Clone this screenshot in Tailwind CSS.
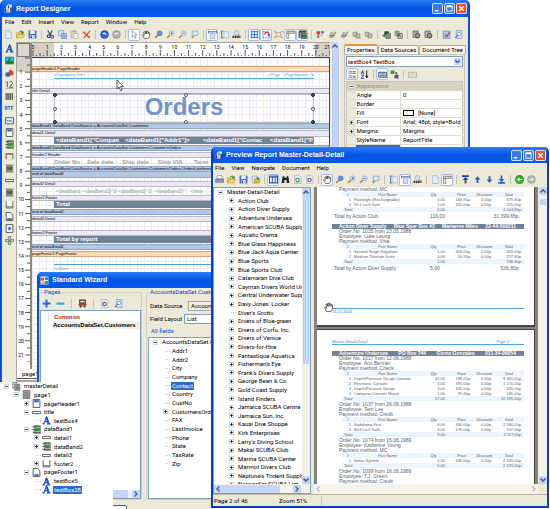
<!DOCTYPE html>
<html lang="en">
<head>
  <meta charset="UTF-8">
  <title>Report Designer</title>
  <script src="https://cdn.jsdelivr.net/npm/@tailwindcss/browser@4"></script>
</head>
<body class="bg-white font-[Roboto,'Liberation_Sans',sans-serif] text-[6px] leading-[8px] text-black">

<!-- icon sprite -->
<svg class="hidden">
  <symbol id="app" viewBox="0 0 16 16"><path d="M1 15V8l3-1V3l3-2h7v14z" fill="#dfe6f0"/><path d="M1 15V8h3v7zM7 3h2v5H7zM11 6h3v9h-3z" fill="#33405c"/><path d="M5 9h4v5H5z" fill="#e8b040"/></symbol>
  <symbol id="wiz" viewBox="0 0 16 16"><path d="M1 1h14v14H1z" fill="#e8eef8"/><path d="M2 3h5v5H2z" fill="#d84028"/><path d="M9 2h5v5H9z" fill="#3870d8"/><path d="M3 10h5v4H3z" fill="#e8b020"/><path d="M9 9h5v5H9z" fill="#30a048"/></symbol>
  <symbol id="new" viewBox="0 0 16 16"><path d="M3 1h7l3 3v11H3z" fill="#e4f0fd" stroke="#7fa3d6"/><path d="M10 1v3h3" fill="#fff" stroke="#7fa3d6"/></symbol>
  <symbol id="open" viewBox="0 0 16 16"><path d="M1 14V5h5l1 2h5v3" fill="#f6d36b" stroke="#b98a1c"/><path d="M1 14l3-6h11l-3 6z" fill="#ffd966" stroke="#b98a1c"/><path d="M6 4c2-3 5-3 6 0M14 3l-2 3-3-2" fill="none" stroke="#1f9a2c" stroke-width="2"/></symbol>
  <symbol id="save" viewBox="0 0 16 16"><path d="M1 1h13l1 1v13H1z" fill="#4b6fc8"/><path d="M4 1h8v6H4z" fill="#f2f6ff"/><path d="M4 9h8v6H4z" fill="#cdd9f2"/><path d="M5 10h2v4H5z" fill="#2a428c"/></symbol>
  <symbol id="cut" viewBox="0 0 16 16"><path d="M3 1l6 9M11 1L7 10" stroke="#33425f" stroke-width="2"/><circle cx="5" cy="11" r="2.500" fill="none" stroke="#33425f" stroke-width="2"/><circle cx="11" cy="12" r="2.500" fill="none" stroke="#2459c0" stroke-width="2"/></symbol>
  <symbol id="copy" viewBox="0 0 16 16"><path d="M1 1h9v9H1z" fill="#d9e8fb" stroke="#5585c9"/><path d="M6 6h9v9H6z" fill="#a9caf4" stroke="#3f74bd"/><path d="M8 9h5M8 12h5" stroke="#3f74bd"/></symbol>
  <symbol id="paste" viewBox="0 0 16 16"><path d="M2 2h10v12H2z" fill="#d8d5c8" stroke="#a5a294"/><path d="M5 1h4v3H5z" fill="#aaa79a"/><path d="M7 6h7v9H7z" fill="#f1f0ea" stroke="#a5a294"/></symbol>
  <symbol id="delete" viewBox="0 0 16 16"><path d="M2 3l12 11M14 2L3 14" stroke="#d8502c" stroke-width="2.600"/></symbol>
  <symbol id="undo" viewBox="0 0 16 16"><circle cx="8" cy="8" r="7" fill="#2867d8" stroke="#17429a"/><path d="M4 7c2-4 7-3 8 1l-3 .5c-.5-1.500-2-2-3-1z" fill="#dbe8ff"/></symbol>
  <symbol id="redo" viewBox="0 0 16 16"><circle cx="8" cy="8" r="7" fill="#aeb0b2" stroke="#88898b"/><path d="M12 7c-2-4-7-3-8 1l3 .5c.5-1.500 2-2 3-1z" fill="#e8e8e6"/></symbol>
  <symbol id="cursor" viewBox="0 0 16 16"><path d="M4 1v12l3-3 2 5 2-1-2-5h4z" fill="#fff" stroke="#668"/></symbol>
  <symbol id="hand" viewBox="0 0 16 16"><path d="M4 15l-3-6 1-1 2 2L3 4l2-1 1 4V2h2v5l1-5 2 1v4l1-3 2 1-1 7-2 3z" fill="#fff" stroke="#333" stroke-width="1.200"/></symbol>
  <symbol id="zoom" viewBox="0 0 16 16"><path d="M2 14l5-5" stroke="#c98a3c" stroke-width="3"/><circle cx="10" cy="6" r="4.400" fill="#5f93e6" stroke="#3f68b4"/></symbol>
  <symbol id="zoomin" viewBox="0 0 16 16"><path d="M2 14l5-5" stroke="#c98a3c" stroke-width="3"/><circle cx="10" cy="6" r="4.400" fill="#dce9fb" stroke="#6f96d0"/><path d="M8 6h4M10 4v4" stroke="#2459c0" stroke-width="1.400"/></symbol>
  <symbol id="zoomout" viewBox="0 0 16 16"><path d="M2 14l5-5" stroke="#c98a3c" stroke-width="3"/><circle cx="10" cy="6" r="4.400" fill="#dce9fb" stroke="#6f96d0"/><path d="M8 6h4" stroke="#2459c0" stroke-width="1.400"/></symbol>
  <symbol id="zoombox" viewBox="0 0 16 16"><path d="M3 14l4-4" stroke="#c98a3c" stroke-width="3"/><path d="M4 2h10v8H4z" fill="#dce9fb" stroke="#6f86b0"/></symbol>
  <symbol id="pagewidth" viewBox="0 0 16 16"><path d="M4 5h8v10H4z" fill="#cfe0f8" stroke="#6f93cc"/><path d="M1 1v5M15 1v5M2 3h12" stroke="#2a56b0" stroke-width="1.500"/></symbol>
  <symbol id="pageheight" viewBox="0 0 16 16"><path d="M7 3h8v11H7z" fill="#e6f0fc" stroke="#8aa9d8"/><path d="M1 2h5M1 14h5M3 3v10" stroke="#2a56b0" stroke-width="1.500"/></symbol>
  <symbol id="find" viewBox="0 0 16 16"><circle cx="8" cy="5" r="4" fill="#cfe3fa" stroke="#6d96cf"/><path d="M1 12h14" stroke="#333" stroke-width="4" stroke-dasharray="3 1"/><path d="M11 8l3 3" stroke="#c98a3c" stroke-width="2"/></symbol>
  <symbol id="grid" viewBox="0 0 16 16"><path d="M3 1v14M8 1v14M13 1v14M1 3h14M1 8h14M1 13h14" stroke="#3a66d8" stroke-width="1.600"/></symbol>
  <symbol id="snap" viewBox="0 0 16 16"><path d="M2 1v14M2 14h13M14 8v7M1 3h4" stroke="#3a66d8" stroke-width="1.500" stroke-dasharray="2 1"/><path d="M5 8c0-6 7-6 7 0" fill="none" stroke="#d03a28" stroke-width="2.400"/><path d="M9 8h6l-3 4z" fill="#234bb8"/></symbol>
  <symbol id="fit" viewBox="0 0 16 16"><path d="M4 5h8v6H4z" fill="#f6f3e8" stroke="#b0714c"/><path d="M1 2l3 2M15 2l-3 2M1 14l3-2M15 14l-3-2" stroke="#806a50" stroke-width="1.600"/></symbol>
  <symbol id="rulers" viewBox="0 0 16 16"><path d="M1 2h14v4H1zM1 6h4v9H1z" fill="#efe9d0" stroke="#555"/><path d="M4 2v2M7 2v2M10 2v2M13 2v2" stroke="#333"/></symbol>
  <symbol id="bands" viewBox="0 0 16 16"><path d="M2 1h13v4H2z" fill="#3b4c38"/><path d="M5 6h10v4H5zM5 11h10v4H5z" fill="#35a046" stroke="#224"/><path d="M2 2v12" stroke="#333" stroke-width="2"/></symbol>
  <symbol id="align" viewBox="0 0 16 16"><path d="M1 2h6v6H1z" fill="#d83a28"/><path d="M9 2h5v4H9z" fill="#4068d0"/><path d="M2 9h4v5H2z" fill="#7d8aa8"/><path d="M8 8h3v3H8z" fill="#e0b030"/></symbol>
  <symbol id="gray1" viewBox="0 0 16 16"><path d="M2 12l4-8 4 2 4-3-3 8-5 3z" fill="#c6c3b7" stroke="#77756c"/><path d="M4 10h7" stroke="#77756c" stroke-width="2"/></symbol>
  <symbol id="gray2" viewBox="0 0 16 16"><path d="M2 4h7v7H2zM7 7h7v7H7z" fill="#cbc8bc" stroke="#8a887e" stroke-width="1.400"/></symbol>
  <symbol id="group" viewBox="0 0 16 16"><path d="M4 2h8v9H4z" fill="#444" /><path d="M7 6h8v9H7z" fill="#8d8d84" stroke="#444"/><path d="M1 10h6M4 7v6" stroke="#1fa02e" stroke-width="2.400"/></symbol>
  <symbol id="ungroup" viewBox="0 0 16 16"><path d="M2 2h7v8H2zM7 6h8v9H7z" fill="#b9b7ad" stroke="#555"/><path d="M4 4l8 8M12 5l-7 8" stroke="#555" stroke-width="1.500"/></symbol>
  <symbol id="props-icon" viewBox="0 0 16 16"><path d="M2 2h9v11H2z" fill="#d9d7cc" stroke="#444" stroke-width="1.400"/><circle cx="10" cy="10" r="4" fill="#999" stroke="#333" stroke-width="1.400"/><path d="M4 5h5M4 8h3" stroke="#444"/></symbol>
  <symbol id="check" viewBox="0 0 16 16"><path d="M2 2h12v13H2z" fill="#a8c8f4" stroke="#4a78c4"/><path d="M5 8l3 4 6-8" fill="none" stroke="#d8502c" stroke-width="2.600"/></symbol>
  <symbol id="preview" viewBox="0 0 16 16"><path d="M4 1h10v14H4z" fill="#d6e7fc" stroke="#5a8ad0"/><circle cx="9" cy="7" r="3" fill="#fff" stroke="#3f74bd"/><path d="M2 14l5-5" stroke="#4a78c4" stroke-width="2"/></symbol>
  <symbol id="A" viewBox="0 0 16 16"><path d="M1 14h4M9 14h6M3 14L8 2l4 12M5 10h6" fill="none" stroke="#1f4fd0" stroke-width="2"/><path d="M8 2l4 12" stroke="#1f4fd0" stroke-width="3.400"/></symbol>
  <symbol id="picture" viewBox="0 0 16 16"><path d="M1 2h14v12H1z" fill="#25c8e8" stroke="#124"/><path d="M2 10l4-3 4 3 4-2v5H2z" fill="#157a2a"/><circle cx="8" cy="6" r="2" fill="#0d5a50"/></symbol>
  <symbol id="shape" viewBox="0 0 16 16"><path d="M1 8h8v7H1z" fill="#2b55c8"/><path d="M9 2l6 5v6H9L6 8z" fill="#d84028"/></symbol>
  <symbol id="num" viewBox="0 0 16 16"><path d="M4 3v10M2 4l2-2M8 4c2-3 6-1 5 2l-5 7h6" fill="none" stroke="#444" stroke-width="1.500"/><path d="M1 15h14" stroke="#888"/></symbol>
  <symbol id="barcode" viewBox="0 0 16 16"><path d="M1 2h14v12H1z" fill="#ddd"/><path d="M2 2v12M5 2v12M7 2v12M10 2v12M13 2v12" stroke="#333" stroke-width="1.600"/></symbol>
  <symbol id="sub" viewBox="0 0 16 16"><path d="M1 3h14v11H1z" fill="#eaf1ff" stroke="#2b55c8" stroke-width="1.600"/><path d="M4 10V7l2 2 2-2v3M10 7v3h3" fill="none" stroke="#345"/></symbol>
  <symbol id="phead" viewBox="0 0 16 16"><path d="M2 1h12v14H2z" fill="#fff" stroke="#444" stroke-width="1.500"/><path d="M4 2h8v4H4z" fill="#2b62dc"/></symbol>
  <symbol id="pfoot" viewBox="0 0 16 16"><path d="M2 1h8l4 4v10H2z" fill="#fff" stroke="#444" stroke-width="1.500"/><path d="M4 11h8v3H4z" fill="#2b62dc"/></symbol>
  <symbol id="pmid" viewBox="0 0 16 16"><path d="M2 1h12v14H2z" fill="#fff" stroke="#444" stroke-width="1.500"/><path d="M5 8h6M8 5v6" stroke="#2b62dc" stroke-width="3"/></symbol>
  <symbol id="band" viewBox="0 0 16 16"><path d="M4 1h11v14H4z" fill="#d8d4c4" stroke="#444"/><path d="M5 5h9v6H5z" fill="#23a336"/><path d="M1 3h5M1 8h4M1 13h5M5 3h9M5 13h9" stroke="#444" stroke-width="1.600"/></symbol>
  <symbol id="header" viewBox="0 0 16 16"><path d="M2 13V3h12v10" fill="none" stroke="#555" stroke-width="1.600"/><path d="M2 4h12" stroke="#777" stroke-width="2"/></symbol>
  <symbol id="ghead" viewBox="0 0 16 16"><path d="M1 2h14M1 14h14M3 5h10v6H3z" fill="#88857a" stroke="#444" stroke-width="1.500"/><path d="M4 6l8 4M12 6l-8 4" stroke="#333"/></symbol>
  <symbol id="detail" viewBox="0 0 16 16"><path d="M1 6h14v4H1z" fill="#fff" stroke="#444" stroke-width="1.500"/></symbol>
  <symbol id="footer" viewBox="0 0 16 16"><path d="M2 2v12h12V2" fill="#fff" stroke="#555" stroke-width="1.600"/><path d="M2 12h12" stroke="#777" stroke-width="2"/></symbol>
  <symbol id="cross" viewBox="0 0 16 16"><path d="M6 1h4v5h5v4h-5v5H6v-5H1V6h5z" fill="#d8d4c4" stroke="#444"/><path d="M6 6h4v4H6z" fill="#23a336"/></symbol>
  <symbol id="pages" viewBox="0 0 16 16"><path d="M1 1h8v10H1z" fill="#ccc" stroke="#555"/><path d="M5 4h9v11H5z" fill="#aaa" stroke="#444"/><path d="M7 7h5M7 10h5M7 12h5" stroke="#444"/></symbol>
  <symbol id="page" viewBox="0 0 16 16"><path d="M2 1h12v14H2z" fill="#aaa" stroke="#444"/><path d="M4 4h8M4 7h8M4 10h8M4 13h8" stroke="#444"/></symbol>
  <symbol id="print" viewBox="0 0 16 16"><path d="M4 1h8l1 6H3z" fill="#fff" stroke="#778"/><path d="M1 7h14v6H1z" fill="#8f9fb8" stroke="#556"/><path d="M4 11h8v3H4z" fill="#6ea0f0"/></symbol>
  <symbol id="export" viewBox="0 0 16 16"><path d="M2 2h9v12H2z" fill="#dfeafa" stroke="#6f93cc"/><path d="M6 7h9v7H6z" fill="#e9b94a" stroke="#a67a1c"/><path d="M8 5h4V2l3 4-3 3V7" fill="#1f9a2c"/></symbol>
  <symbol id="panel" viewBox="0 0 16 16"><path d="M1 2h14v12H1z" fill="#fff" stroke="#2b55c8" stroke-width="2"/><path d="M2 4h12M6 3v11M11 3v11" stroke="#2b55c8" stroke-width="1.600"/></symbol>
  <symbol id="binoc" viewBox="0 0 16 16"><path d="M3 2h3v3h4V2h3l2 12h-5V9H6v5H1z" fill="#1f2430"/></symbol>
  <symbol id="refresh" viewBox="0 0 16 16"><path d="M3 1h8l3 3v11H3z" fill="#e4f0fd" stroke="#7fa3d6"/><path d="M5 9c0-4 5-4 6-1M11 9c0 4-5 4-6 1" fill="none" stroke="#1f9a2c" stroke-width="2"/></symbol>
  <symbol id="setup" viewBox="0 0 16 16"><path d="M3 1h8l3 3v11H3z" fill="#eef3fa" stroke="#8fa3c6"/><circle cx="8" cy="9" r="3" fill="none" stroke="#667" stroke-width="2"/></symbol>
  <symbol id="first" viewBox="0 0 16 16"><path d="M2 2h12M8 15V6" stroke="#1e4896" stroke-width="3"/><path d="M3 9l5-6 5 6z" fill="#1e4896"/></symbol>
  <symbol id="prev" viewBox="0 0 16 16"><path d="M8 14V6" stroke="#2a62c8" stroke-width="3.400"/><path d="M3 8l5-6 5 6z" fill="#2a62c8"/></symbol>
  <symbol id="next" viewBox="0 0 16 16"><path d="M8 2v8" stroke="#2a62c8" stroke-width="3.400"/><path d="M3 8l5 6 5-6z" fill="#2a62c8"/></symbol>
  <symbol id="last" viewBox="0 0 16 16"><path d="M2 14h12M8 1v9" stroke="#2a62c8" stroke-width="3"/><path d="M3 7l5 6 5-6z" fill="#2a62c8"/></symbol>
  <symbol id="back" viewBox="0 0 16 16"><circle cx="8" cy="8" r="7.400" fill="#2fae2a" stroke="#1b7c1a"/><path d="M3 8l5-4v3h5v2H8v3z" fill="#fff"/></symbol>
  <symbol id="forward" viewBox="0 0 16 16"><circle cx="8" cy="8" r="7" fill="#b4b4b0" stroke="#94948f"/><path d="M13 8L8 4v3H3v2h5v3z" fill="#e8e8e6"/></symbol>
  <symbol id="plus" viewBox="0 0 16 16"><path d="M8 1v14M1 8h14" stroke="#1f6ad8" stroke-width="3.400"/></symbol>
  <symbol id="minus" viewBox="0 0 16 16"><path d="M1 8h14" stroke="#36a8e8" stroke-width="4"/></symbol>
  <symbol id="train" viewBox="0 0 16 16"><path d="M2 1h12v10H2z" fill="#4a3028"/><path d="M4 3h8v3H4z" fill="#e8d8c8"/><path d="M1 8h14v4H1z" fill="#c04028"/><path d="M3 12h3v3H3zM10 12h3v3h-3z" fill="#222"/></symbol>
  <symbol id="cats" viewBox="0 0 16 16"><path d="M2 2h4v4H2zM2 10h4v4H2z" fill="#fff" stroke="#445"/><path d="M8 3h6M8 6h6M8 11h6M8 14h6" stroke="#445" stroke-width="1.400"/></symbol>
  <symbol id="az" viewBox="0 0 16 16"><path d="M2 7l2.500-6L7 7M3 5h3M2 9h5l-5 6h5" fill="none" stroke="#2348a8" stroke-width="1.600"/><path d="M12 1v12" stroke="#222" stroke-width="1.800"/><path d="M9 10h6l-3 5z" fill="#222"/></symbol>
  <symbol id="pbox" viewBox="0 0 16 16"><path d="M1 4h14v9H1z" fill="#b7c9e8" stroke="#334a7c" stroke-width="1.500"/><path d="M4 7h8M4 10h8" stroke="#334a7c"/></symbol>
  <symbol id="events" viewBox="0 0 16 16"><path d="M1 1h7v6H1z" fill="#23a336"/><path d="M9 5h3v5" fill="none" stroke="#222" stroke-width="1.500"/><path d="M8 9h7v6H8z" fill="#556"/></symbol>
  <symbol id="ppage" viewBox="0 0 16 16"><path d="M1 4h14v9H1z" fill="#e4e1d4" stroke="#b4b1a4" stroke-width="1.500"/><path d="M4 8h8" stroke="#b4b1a4"/></symbol>
  <symbol id="exp" viewBox="0 0 9 9"><path d="M.5.500h8v8h-8z" fill="#fff" stroke="#8c9cb0"/><path d="M2 4.500h5M4.500 2v5" stroke="#000" stroke-width="1.400"/></symbol>
  <symbol id="col" viewBox="0 0 9 9"><path d="M.5.500h8v8h-8z" fill="#fff" stroke="#8c9cb0"/><path d="M2 4.500h5" stroke="#000" stroke-width="1.400"/></symbol>
  <symbol id="up" viewBox="0 0 8 8"><path d="M1.500 5.500L4 3l2.500 2.500" fill="none" stroke="#4d6185" stroke-width="1.600"/></symbol>
  <symbol id="down" viewBox="0 0 8 8"><path d="M1.500 2.500L4 5l2.500-2.500" fill="none" stroke="#4d6185" stroke-width="1.600"/></symbol>
  <symbol id="left" viewBox="0 0 8 8"><path d="M5.500 1.500L3 4l2.500 2.500" fill="none" stroke="currentColor" stroke-width="1.400"/></symbol>
  <symbol id="right" viewBox="0 0 8 8"><path d="M2.500 1.500L5 4 2.500 6.500" fill="none" stroke="currentColor" stroke-width="1.400"/></symbol>
  <symbol id="wmin" viewBox="0 0 10 10"><path d="M2 7.500h4" stroke="#fff" stroke-width="1.600"/></symbol>
  <symbol id="wmax" viewBox="0 0 10 10"><path d="M2 2.500h6v5.500H2z" fill="none" stroke="#fff"/><path d="M2 2.500h6" stroke="#fff" stroke-width="2"/></symbol>
  <symbol id="wclose" viewBox="0 0 10 10"><path d="M2.500 2.500l5 5M7.500 2.500l-5 5" stroke="#fff" stroke-width="1.500"/></symbol>
</svg>

<main class="relative h-screen overflow-hidden">

  <!-- Report Designer window -->
  <section class="absolute left-0 top-0 w-[470px] h-[382px] flex flex-col rounded-t-[5px] bg-[#0a50e0] px-[2px] overflow-hidden">
    <header class="h-[17px] shrink-0 flex items-center gap-[3px] pl-[2px] bg-linear-to-b from-[#2a7cf6] via-[#0455e4] to-[#0558ea] text-white">
      <svg class="size-[9px]"><use href="#app"/></svg>
      <h1 class="flex-1 font-['Liberation_Sans'] text-[7px] font-bold">Report Designer</h1>
      <div class="flex gap-px pr-px" data-winbtns></div>
    </header>
    <nav class="h-[10px] shrink-0 flex items-center gap-[7px] pl-[3px] bg-[#ece9d8]">
      <button>File</button><button>Edit</button><button>Insert</button><button>View</button><button>Report</button><button>Window</button><button>Help</button>
    </nav>
    <div class="h-[15px] shrink-0 flex items-center bg-[#ece9d8]" data-icons="new open save | cut copy paste delete | undo redo | *cursor hand zoom zoomin zoomout zoombox | *pagewidth pageheight find | *grid *snap fit *rulers *bands | align gray1 gray1 gray2 gray2 | group ungroup | props-icon props-icon | check preview"></div>

    <div class="flex-1 min-h-0 flex bg-[#ece9d8]">
      <div class="w-[14px] flex flex-col items-center shrink-0">
        <div class="flex flex-col" data-icons="A picture shape num barcode"></div>
        <button class="h-[12px] text-[5px] font-bold text-[#2b55c8]">RTF</button>
        <div class="flex flex-col" data-icons="sub phead band header ghead detail ghead footer pfoot pmid cross"></div>
      </div>
      <div class="flex-1 min-w-0 flex flex-col">
        <div class="flex-1 min-h-0 flex border-l border-t border-[#aca899] bg-white">
          <!-- vertical ruler -->
          <div class="w-[15px] shrink-0 border-r-2 border-[#8c8a80]">
            <div class="h-[14px] border border-[#777] bg-[#dcdad0]"></div>
            <svg class="w-full h-[305px]" id="vruler"></svg>
          </div>
          <div class="flex-1 min-w-0 flex flex-col">
            <svg class="w-full h-[14px] shrink-0 bg-white" id="hruler"></svg>
            <!-- design surface -->
            <div class="flex-1 min-h-0 border-t border-r border-[#444] bg-white bg-[linear-gradient(to_right,#ebe9f6_1px,transparent_1px),linear-gradient(#ebe9f6_1px,transparent_1px)] bg-[size:7px_7px] font-['Liberation_Sans'] text-[4px] leading-[4px] whitespace-nowrap overflow-hidden">
              <div class="mt-[8px] h-[6px] border-y border-[#c8a888] bg-[#fdd9b4]">pageHeader1:PageHeader</div>
              <div class="h-[7px] ml-[22px] mr-[15px] flex justify-between items-center italic text-[#5b9bd5] border-b border-[#4aa3dc]"><span>&lt;Document Title&gt;</span><span>="Page "+PageNumber.To</span></div>
              <div class="mt-[9px] h-[6px] border-y border-[#aaa] bg-[#e8e8fa]">title Detail</div>
              <div class="relative h-[29px] ml-[22px] mr-[15px] border border-[#bbb] flex items-center justify-center font-bold text-[24px] leading-[24px] text-[#7093c8] pb-[3px]">Orders
                <i class="absolute -left-[2px] -top-[2px] size-[4px] rounded-full bg-[#2b62b8] border border-[#222]"></i>
                <i class="absolute left-1/2 -top-[2px] size-[4px] rounded-full bg-white border border-[#555]"></i>
                <i class="absolute -right-[2px] -top-[2px] size-[4px] rounded-full bg-[#2b62b8] border border-[#222]"></i>
                <i class="absolute -left-[2px] top-[12px] size-[4px] rounded-full bg-white border border-[#555]"></i>
                <i class="absolute -right-[2px] top-[12px] size-[4px] rounded-full bg-white border border-[#555]"></i>
                <i class="absolute -left-[2px] -bottom-[2px] size-[4px] rounded-full bg-[#2b62b8] border border-[#222]"></i>
                <i class="absolute left-1/2 -bottom-[2px] size-[4px] rounded-full bg-white border border-[#555]"></i>
                <i class="absolute -right-[2px] -bottom-[2px] size-[4px] rounded-full bg-[#2b62b8] border border-[#222]"></i>
              </div>
              <div class="h-[6px] border-y border-[#8fa4c4] bg-[#b4c8e4]">dataBand1 DataBand DataSource = AccountsDataSet.Customers</div>
              <div class="mt-px h-[7px] border-y border-[#bbb] bg-[#e8e8fa]">detail1 Detail</div>
              <div class="h-[7px] ml-[22px] mr-[15px] pl-[2px] flex items-center gap-[5px] bg-[#708296] text-white font-bold text-[6px] leading-[7px]"><span class="w-[64px]">&lt;dataBand1["Compan</span><span class="w-[73px]">&lt;dataBand1["Addr1"]&gt;</span><span class="w-[62px]">&lt;dataBand1["Contac</span><span>&lt;dataBand1["P</span></div>
              <div class="mt-px h-[6px] border-y border-[#8fa4c4] bg-[#b4c8e4]">dataBand2:DataBand DataSource = AccountsDataSet.Customers.CustomersOrders</div>
              <div class="mt-px h-[6px] border-y border-[#bbb] bg-[#e8e8fa]">header2 Header</div>
              <div class="h-[8px] ml-[22px] flex items-center font-bold text-[6px] text-[#9aa2b0]"><span class="w-[33px]">Order No</span><span class="w-[35px]">Sale date</span><span class="w-[36px]">Ship date</span><span class="w-[36px]">Ship VIA</span><span>Term</span></div>
              <div class="h-[6px] border-y border-[#8fa4c4] bg-[#b4c8e4]">dataBand3:DataBand DataSource = AccountsDataSet.Customers.CustomersOrders.OrdersLineItems</div>
              <div class="h-[6px] border-b border-[#8fa4c4] bg-[#b4c8e4]">end of dataBand3</div>
              <div class="mt-[3px] h-[6px] border-y border-[#bbb] bg-[#e8e8fa]">detail2:Detail</div>
              <div class="h-[8px] ml-[22px] pl-[2px] flex items-center text-[5px] text-[#9aa2b0]"><span class="w-[27px]">&lt;dataBand</span><span class="w-[35px]">&lt;dataBand2["S</span><span class="w-[37px]">&lt;dataBand2["S</span><span class="w-[35px]">&lt;dataBand2["</span><span>&lt;data</span></div>
              <div class="h-[6px] border-y border-[#bbb] bg-[#e8e8fa]">footer1 Footer</div>
              <div class="h-[7px] ml-[22px] mr-[15px] pl-[2px] bg-[#708296] text-white font-bold text-[6px] leading-[7px]">Total</div>
              <div class="mt-px h-[6px] border-y border-[#8fa4c4] bg-[#b4c8e4]">end of dataBand2</div>
              <div class="mt-px h-[6px] border-y border-[#bbb] bg-[#e8e8fa]">detail3:Detail</div>
              <div class="mt-[8px] h-[6px] border-y border-[#bbb] bg-[#e8e8fa]">footer2:Footer</div>
              <div class="h-[7px] ml-[22px] mr-[15px] pl-[2px] bg-[#708296] text-white font-bold text-[6px] leading-[7px]">Total by report</div>
              <div class="mt-px h-[6px] border-y border-[#8fa4c4] bg-[#b4c8e4]">end of dataBand1</div>
              <div class="mt-px h-[6px] border-y border-[#c8a888] bg-[#fdd9b4]">pageFooter1:PageFooter</div>
              <div class="mt-[7px] ml-[22px] mr-[15px] pt-[2px] border-t border-[#4aa3dc] italic text-[#5b9bd5]">&lt;=Now&gt;</div>
            </div>
          </div>
        </div>
        <div class="h-[13px] flex items-start bg-white border-l border-b-2 border-[#aca899]"><button class="h-[10px] pl-[5px] pr-[6px] border-b border-[#555]">page1</button></div>
      </div>
      <div class="w-[11px] shrink-0 px-px" data-vscroll="0"></div>

      <!-- properties panel -->
      <aside class="w-[127px] shrink-0 py-[2px] px-[3px] flex flex-col">
        <div class="flex items-end h-[10px] whitespace-nowrap">
          <button class="h-full px-[2px] bg-[#fbfaf6] border border-b-0 border-t-2 border-[#b0ad9e] border-t-[#e89430] rounded-t-[2px]">Properties</button>
          <button class="h-[9px] px-[2px] bg-[#f5f3ea] border border-b-0 border-[#b0ad9e] rounded-t-[2px]">Data Sources</button>
          <button class="h-[9px] px-[2px] bg-[#f5f3ea] border border-b-0 border-[#b0ad9e] rounded-t-[2px]">Document Tree</button>
        </div>
        <div class="flex-1 flex flex-col border border-[#c8c5b6] px-px pt-px">
          <div class="relative">
            <select aria-label="Object" class="block w-full h-[11px] pl-px appearance-none bg-white border border-[#7f9db9]"><option>textBox4 TextBox</option></select>
            <svg class="absolute right-[2px] top-[2px] size-[7px] bg-[#c4d5fa] pointer-events-none"><use href="#down"/></svg>
          </div>
          <div class="h-[14px] flex items-center" data-icons="*cats az | *pbox events | ppage"></div>
          <table class="w-full table-fixed bg-white border border-[#c8c5b6]">
            <colgroup><col class="w-[9px]"><col class="w-[45px]"><col></colgroup>
            <tbody id="props"></tbody>
          </table>
        </div>
      </aside>
    </div>
  </section>

  <!-- Standard Wizard window -->
  <section class="absolute left-[37px] top-[272px] -bottom-[10px] w-[180px] flex flex-col rounded-t-[5px] bg-[#0a50e0] pl-[2px] overflow-hidden">
    <header class="h-[16px] shrink-0 flex items-center gap-[3px] pl-px bg-linear-to-b from-[#2a7cf6] via-[#0455e4] to-[#0558ea] text-white">
      <svg class="size-[9px]"><use href="#wiz"/></svg>
      <h2 class="font-['Liberation_Sans'] text-[7px] font-bold">Standard Wizard</h2>
    </header>
    <div class="flex-1 min-h-0 flex gap-[4px] bg-[#ece9d8] whitespace-nowrap">
      <div class="w-[103px] shrink-0 flex flex-col">
        <fieldset class="flex-1 min-h-0 flex flex-col border border-[#d0d0bf] rounded-[2px]">
          <legend class="ml-[3px] px-px text-[#0046d5]">Pages</legend>
          <div class="h-[14px] shrink-0 flex items-center gap-[2px]" data-icons="plus minus | train | setup preview"></div>
          <div class="flex-1 flex flex-col border border-[#7f9db9] bg-white font-['Liberation_Sans'] font-bold">
            <div class="mt-[2px] ml-[7px] pl-[5px] border-l border-[#ddd] text-[#b02818]">Common</div>
            <div class="ml-[12px] bg-[#f4f1e2] overflow-hidden">AccountsDataSet.Customers</div>
            <div class="flex-1"></div>
            <div class="h-[8px] flex justify-end bg-[#f3f1ea] text-[#4d6185]"><div class="w-[60px] bg-[#c4d5fa] rounded-[1px]"></div><svg class="ml-[4px] size-[8px] bg-[#c4d5fa]"><use href="#right"/></svg></div>
          </div>
        </fieldset>
        <div class="h-[19px] pt-[5px] pl-[60px]"><button aria-label="Back" class="block w-[28px] h-[14px] bg-white border border-[#4a6080] rounded-[2px]"></button></div>
      </div>
      <div class="flex-1 min-w-0 flex flex-col pb-[19px]">
        <fieldset class="flex-1 min-w-0 min-h-0 flex flex-col border border-r-0 border-[#d0d0bf] rounded-[2px] pl-px">
          <legend class="ml-px px-px text-[#0046d5]">AccountsDataSet.Custo</legend>
          <div class="flex items-center h-[11px] mt-[4px] pl-[2px]"><label for="ds" class="w-[38px] shrink-0">Data Source</label><select id="ds" class="flex-1 min-w-0 h-[10px] pl-[2px] appearance-none bg-[#f0eee2] border border-[#aca899]"><option>AccountsDataSet</option></select></div>
          <div class="flex items-center h-[11px] mt-[2px] pl-[2px]"><label for="fl" class="w-[34px] shrink-0">Field Layout</label><select id="fl" class="flex-1 min-w-0 h-[10px] pl-[2px] appearance-none bg-white border border-[#7f9db9]"><option>List</option></select></div>
          <div class="mt-[3px] h-[10px] pl-[3px] text-[#0046d5]">All fields</div>
          <div class="flex-1 min-h-0 border border-r-0 border-[#7f9db9] bg-white"><ul class="h-[130px] flex flex-col" id="fields"></ul></div>
        </fieldset>
      </div>
    </div>
  </section>

  <!-- document tree -->
  <section class="absolute left-0 top-[382px] bottom-0 w-[113px] bg-white">
    <ul class="h-[112px] flex flex-col" id="doctree"></ul>
  </section>

  <!-- Preview window -->
  <section class="absolute left-[211px] right-px top-[147px] bottom-px flex flex-col rounded-t-[5px] bg-[#0a3fc4] px-[2px] pb-[2px] overflow-hidden">
    <header class="h-[16px] shrink-0 flex items-center gap-[3px] pl-[2px] bg-linear-to-b from-[#2a7cf6] via-[#0455e4] to-[#0558ea] text-white">
      <svg class="size-[8px]"><use href="#app"/></svg>
      <h2 class="flex-1 font-['Liberation_Sans'] text-[7px] font-bold">Preview Report Master-Detail-Detail</h2>
      <div class="flex gap-px pr-px" data-winbtns></div>
    </header>
    <nav class="h-[9px] shrink-0 flex items-center gap-[7px] pl-[2px] bg-[#ece9d8]">
      <button>File</button><button>View</button><button>Navigate</button><button>Document</button><button>Help</button>
    </nav>
    <div class="h-[15px] shrink-0 flex items-center bg-[#ece9d8]" data-icons="print open save export | *panel binoc refresh setup | *hand zoom zoomin zoomout zoombox | pageheight *pagewidth find | new *rulers | first prev next last | back forward"></div>

    <div class="flex-1 min-h-0 flex bg-[#ece9d8]">
      <div class="w-[98px] shrink-0 flex flex-col border border-[#7f9db9] bg-white">
        <div class="flex-1 min-h-0 flex">
          <div class="flex-1 min-w-0 overflow-hidden"><ul class="h-[301px] flex flex-col" id="outline"></ul></div>
          <div class="w-[8px] shrink-0" data-vscroll="1"></div>
        </div>
        <div class="h-[9px] shrink-0 flex items-center bg-[#f3f1ea] text-[#4d6185] pr-[9px]"><svg class="size-[8px] bg-[#c4d5fa]"><use href="#left"/></svg><div class="w-[58px] h-[8px] bg-[#c4d5fa] rounded-[1px]"></div><div class="flex-1"></div><svg class="size-[8px] bg-[#c4d5fa]"><use href="#right"/></svg></div>
      </div>
      <div class="flex-1 min-w-0 flex flex-col ml-[3px]">
        <div class="flex-1 min-h-0 flex">
          <div class="flex-1 min-w-0 pl-[3px] pr-[3px] bg-[#85837a] overflow-hidden font-['Liberation_Sans'] text-[4px] leading-[5px] text-[#55606e]">
            <article class="bg-white border-r border-b-2 border-[#444] h-[140px] pl-[15px] pr-[10px]" id="p1"></article>
            <article class="bg-white border-r border-t border-[#444] mt-[2px] pt-[9px] h-[200px] pl-[15px] pr-[10px]" id="p2"></article>
          </div>
          <div class="w-[9px] shrink-0 pl-px" data-vscroll="2"></div>
        </div>
        <div class="h-[10px] shrink-0 flex items-center justify-between bg-[#f5f3ec] text-[#c0bdae] mr-[9px]"><svg class="size-[8px]"><use href="#left"/></svg><svg class="size-[8px]"><use href="#right"/></svg></div>
      </div>
    </div>
    <footer class="h-[12px] shrink-0 flex items-center border-t border-[#b8b5a6] bg-[#ece9d8]"><span class="w-[66px] pl-px">Page 2 of 46</span><span class="w-[42px]">Zoom 51%</span><span class="h-[9px] border-l border-[#c8c5b6]"></span></footer>
  </section>

  <!-- pointer -->
  <svg class="absolute left-[116px] top-[79px] w-[9px] h-[12px]" viewBox="0 0 9 12"><path d="M1 1v9l2-2 1.500 3.500 1.500-.7L4.600 7.500H7.500z" fill="#fff" stroke="#333" stroke-width=".8"/></svg>
  <svg class="absolute left-[324px] top-[302px] size-[10px]"><use href="#hand"/></svg>
</main>

<script>
  // toolbars: "|" is a separator, "*" marks a pressed button
  document.querySelectorAll('[data-icons]').forEach(el => {
    el.innerHTML = el.dataset.icons.split(' ').map(n => {
      if (n === '|') return '<span class="w-[6px] h-[9px] shrink-0 flex justify-center"><i class="w-px bg-[#c5c2b2]"></i></span>';
      const on = n[0] === '*';
      if (on) n = n.slice(1);
      return `<button aria-label="${n}" class="size-[12px] shrink-0 flex items-center justify-center ${on ? 'bg-white border border-[#a5bce0] rounded-[2px]' : ''}"><svg class="size-[9px] shrink-0"><use href="#${n}"/></svg></button>`;
    }).join('');
  });

  document.querySelectorAll('[data-winbtns]').forEach(el => {
    el.innerHTML = `
      <button aria-label="Minimize" class="size-[11px] rounded-[2px] border border-white/80 bg-[#3c78ee]"><svg class="size-[9px]" viewBox="0 0 10 10"><use href="#wmin"/></svg></button>
      <button aria-label="Maximize" class="size-[11px] rounded-[2px] border border-white/80 bg-[#3c78ee]"><svg class="size-[9px]" viewBox="0 0 10 10"><use href="#wmax"/></svg></button>
      <button aria-label="Close" class="size-[11px] rounded-[2px] border border-white/80 bg-[#e0512c]"><svg class="size-[9px]" viewBox="0 0 10 10"><use href="#wclose"/></svg></button>`;
  });

  const thumbs = ['flex-1', 'h-[168px]', 'h-[6px] mt-[4px]'];
  document.querySelectorAll('[data-vscroll]').forEach(el => {
    el.innerHTML = `<div class="h-full flex flex-col bg-[#f3f1ea]">
      <svg class="size-[8px] shrink-0 bg-[#c4d5fa] rounded-[1px]"><use href="#up"/></svg>
      <div class="${thumbs[el.dataset.vscroll]} mx-px rounded-[1px] bg-[#c4d5fa] border-x border-[#b4c8f4]"></div>
      <svg class="size-[8px] mt-auto shrink-0 bg-[#c4d5fa] rounded-[1px]"><use href="#down"/></svg></div>`;
  });

  // rulers, one unit is 99/7 px
  const u = 99 / 7;
  let h = '<path d="M0 0h22v14H0zM283 0h20v14h-20z" fill="#d4d0c8"/>', v = '<path d="M0 0h13v15H0z" fill="#d4d0c8"/>';
  for (let i = 0; i <= 21; i++) {
    const p = i * u + 1;
    h += `<path d="M${p} 7v6M${p + u / 2} 10v3M${p + u / 4} 12v1M${p + u * 3 / 4} 12v1" stroke="#555"/>` + (i < 21 ? `<text x="${p}" y="6" text-anchor="middle" font-size="5">${i}</text>` : '');
    v += `<path d="M8 ${p}h5M10 ${p + u / 2}h3" stroke="#555"/>` + (i ? `<text x="4" y="${p + 2}" text-anchor="middle" font-size="5">${i}</text>` : '');
  }
  h += '<text x="298" y="6" text-anchor="end" font-size="5">21</text>';
  hruler.innerHTML = h;
  vruler.innerHTML = v;

  const props = [['col', 'Appearance', ''], ['', 'Angle', '0'], ['', 'Border', ''], ['', 'Fill', '[None]'], ['exp', 'Font', 'Arial; 48pt; style=Bold'], ['exp', 'Margins', 'Margins'], ['', 'StyleName', 'ReportTitle'], ['', 'Text', 'Orders']];
  document.getElementById('props').innerHTML = props.map(([b, n, t]) => {
    const box = b ? `<svg class="size-[5px] mx-auto"><use href="#${b}"/></svg>` : '';
    if (n === 'Appearance') return `<tr class="h-[9px] bg-[#d8d4c4] text-[#a8a594] font-bold"><td>${box}</td><td colspan="2" class="pl-px">${n}</td></tr>`;
    return `<tr class="border-b border-[#e0ddd0]"><td class="bg-[#ece9d8]">${box}</td><td class="h-[9px] pl-px border-r border-[#e0ddd0] ${n === 'Text' ? 'bg-[#316ac5] text-white' : ''}">${n}</td><td class="pl-[2px] whitespace-nowrap">${n === 'Fill' ? '<span class="flex items-center gap-[4px]"><i class="w-[11px] h-[6px] border border-black"></i>[None]</span>' : t}</td></tr>`;
  }).join('');

  // tree rows: [indent class, box, icon, text, selected]
  const row = ([pad, box, icon, text, sel]) => `<li class="flex-1 min-h-0 flex items-center whitespace-nowrap ${pad}">
    ${box ? `<svg class="size-[5px] shrink-0 mr-[3px]"><use href="#${box}"/></svg>` : '<i class="w-[5px] border-t border-dotted border-[#c8c5b6] shrink-0 ml-[2px] mr-px"></i>'}
    ${icon ? `<svg class="size-[9px] shrink-0 mr-[2px]"><use href="#${icon}"/></svg>` : ''}
    <span class="px-px ${sel ? 'bg-[#316ac5] text-white' : ''}">${text}</span></li>`;

  doctree.innerHTML = [
    ['pl-[4px]', 'col', 'pages', 'masterDetail'], ['pl-[14px]', 'col', 'page', 'page1'],
    ['pl-[24px]', 'exp', 'phead', 'pageHeader1'], ['pl-[24px]', 'col', 'detail', 'title'],
    ['pl-[34px]', '', 'A', 'textBox4'], ['pl-[24px]', 'col', 'band', 'dataBand1'],
    ['pl-[34px]', 'exp', 'detail', 'detail1'], ['pl-[34px]', 'exp', 'band', 'dataBand2'],
    ['pl-[34px]', '', 'detail', 'detail3'], ['pl-[34px]', 'exp', 'footer', 'footer2'],
    ['pl-[24px]', 'col', 'pfoot', 'pageFooter1'], ['pl-[34px]', '', 'A', 'textBox5'], ['pl-[34px]', '', 'A', 'textBox28', 1]
  ].map(row).join('');

  fields.innerHTML = row(['pl-[4px]', 'col', '', 'AccountsDataSet.C']) +
    ['Addr1', 'Addr2', 'City', 'Company', 'Contact', 'Country', 'CustNo', 'CustomersOrde', 'FAX', 'LastInvoice', 'Phone', 'State', 'TaxRate', 'Zip']
      .map(t => row(['pl-[14px]', t === 'CustomersOrde' ? 'exp' : '', '', t, t === 'Contact'])).join('');

  outline.innerHTML = row(['pl-[4px]', 'col', '', 'Master-Detail-Detail']) +
    ['Action Club', 'Action Diver Supply', 'Adventure Undersea', 'American SCUBA Supply', 'Aquatic Drama', 'Blue Glass Happiness', 'Blue Jack Aqua Center', 'Blue Sports', 'Blue Sports Club', 'Catamaran Dive Club', 'Cayman Divers World Unl', 'Central Underwater Suppl', "Davy Jones' Locker", "Diver's Grotto", 'Divers of Blue-green', 'Divers of Corfu, Inc.', 'Divers of Venice', 'Divers-for-Hire', 'Fantastique Aquatica', "Fisherman's Eye", "Frank's Divers Supply", 'George Bean & Co.', 'Gold Coast Supply', 'Island Finders', 'Jamaica SCUBA Centre', 'Jamaica Sun, Inc.', 'Kauai Dive Shoppe', 'Kirk Enterprises', "Larry's Diving School", 'Makai SCUBA Club', 'Marina SCUBA Center', 'Marmot Divers Club', "Neptune's Trident Supply", 'Norwest\'er SCUBA Lim']
      .map(t => row(['pl-[15px]', t === "Diver's Grotto" ? '' : 'exp', '', t])).join('');

  // report pages
  const line = t => `<p class="pl-[7px] text-[5px]">${t}</p>`;
  const bar = c => `<div class="h-[5px] pl-[7px] pr-[8px] flex justify-between bg-[#708296] text-white font-bold text-[5px]">${c.map(t => `<span>${t}</span>`).join('')}</div>`;
  const sum = (t, q, s) => `<div class="mt-[2px] mb-[5px] pl-[2px] pr-[4px] flex text-[5px]"><span class="flex-1">${t}</span><span class="w-[30px]">${q}</span><span class="w-[60px] text-right">${s}</span></div>`;
  const table = (rows, q, s) => `<table class="w-[calc(100%-10px)] ml-[10px] mb-px table-fixed text-right">
    <colgroup><col class="w-[11px]"><col><col class="w-[23px]"><col class="w-[26px]"><col class="w-[21px]"><col class="w-[32px]"></colgroup>
    <tr class="bg-[#eaf6fd] italic"><th class="font-normal text-center">#</th><th class="font-normal text-center">Part Name</th><th class="font-normal text-center">Qty</th><th class="font-normal pr-[5px]">Price</th><th class="font-normal">Discount</th><th class="font-normal pr-[11px]">Total</th></tr>
    ${rows.map((r, i) => `<tr><td class="pr-[2px]">${i + 1}</td><td class="pl-px text-left">${r[0]}</td><td>${r[1]}</td><td>${r[2]}</td><td>0.00p.</td><td class="pr-[2px]">${r[3]}</td></tr>`).join('')}
    ${q ? `<tr class="bg-[#eaf6fd]"><td colspan="2" class="pl-[2px] text-left">Total</td><td>${q}</td><td colspan="3" class="pr-[2px]">${s}</td></tr>` : ''}</table>`;

  p1.innerHTML = line('Payment method: MC') +
    table([['Flashlight (Rechargeable)', '4,00', '169,95p.', '679,80p.'], ['95.1 cu ft Tank', '1,00', '325,00p.', '325,00p.']], '5,00', '1 004,80p.') +
    sum('Total by Action Club', '116,00', '31 399,65p.') +
    bar(['Action Diver Supply', 'Blue Spar Box #3', 'Marianne Miles', '22-44-500211']) +
    line('Order No. 1035 from 23.05.1988') + line('Employee: Luke Leung') + line('Payment method: Visa') +
    table([['Second Stage Regulator', '1,00', '309,00p.', '309,00p.'], ['Medium Titanium Knife', '4,00', '56,95p.', '227,80p.']], '5,00', '536,80p.') +
    sum('Total by Action Diver Supply', '5,00', '536,80p.') +
    '<p class="mt-[37px] border-t border-[#4aa3dc] text-[#3f7fc0]">14.10.2004</p>';

  p2.innerHTML = '<p class="mb-[6px] pr-[15px] flex justify-between border-b border-[#4aa3dc] italic text-[#3f7fc0]"><span>Master-Detail-Detail</span><span>Page 2</span></p>' +
    bar(['Adventure Undersea', 'PO Box 744', 'Gloria Gonzales', '011-34-09054']) +
    line('Order No. 1017 from 12.06.1988') + line('Employee: Ann Bennet') + line('Payment method: Check') +
    table([['Depth/Pressure Gauge Console', '45,00', '188,00p.', '8 460,00p.'], ['Electronic Console', '3,00', '390,00p.', '1 170,00p.'], ['Depth/Pressure Gauge', '4,00', '105,00p.', '420,00p.'], ['Compass Console Mount', '5,00', '29,00p.', '145,00p.']], '57,00', '10 195,00p.') +
    line('Order No. 1037 from 26.06.1988') + line('Employee: Terri Lee') + line('Payment method: Credit') +
    table([['Stabilizing Vest', '6,00', '430,00p.', '2 580,00p.'], ['80.6 cu ft Tank', '3,00', '179,00p.', '537,00p.']], '9,00', '3 117,00p.') +
    line('Order No. 1074 from 15.06.1989') + line('Employee: Katherine Young') + line('Payment method: MC') +
    table([['Sonar System', '5,00', '439,00p.', '2 195,00p.']], '5,00', '2 195,00p.') +
    line('Order No. 1099 from 16.06.1989') + line('Employee: T.J. Green') + line('Payment method: Credit') + table([]);
</script>
</body>
</html>
